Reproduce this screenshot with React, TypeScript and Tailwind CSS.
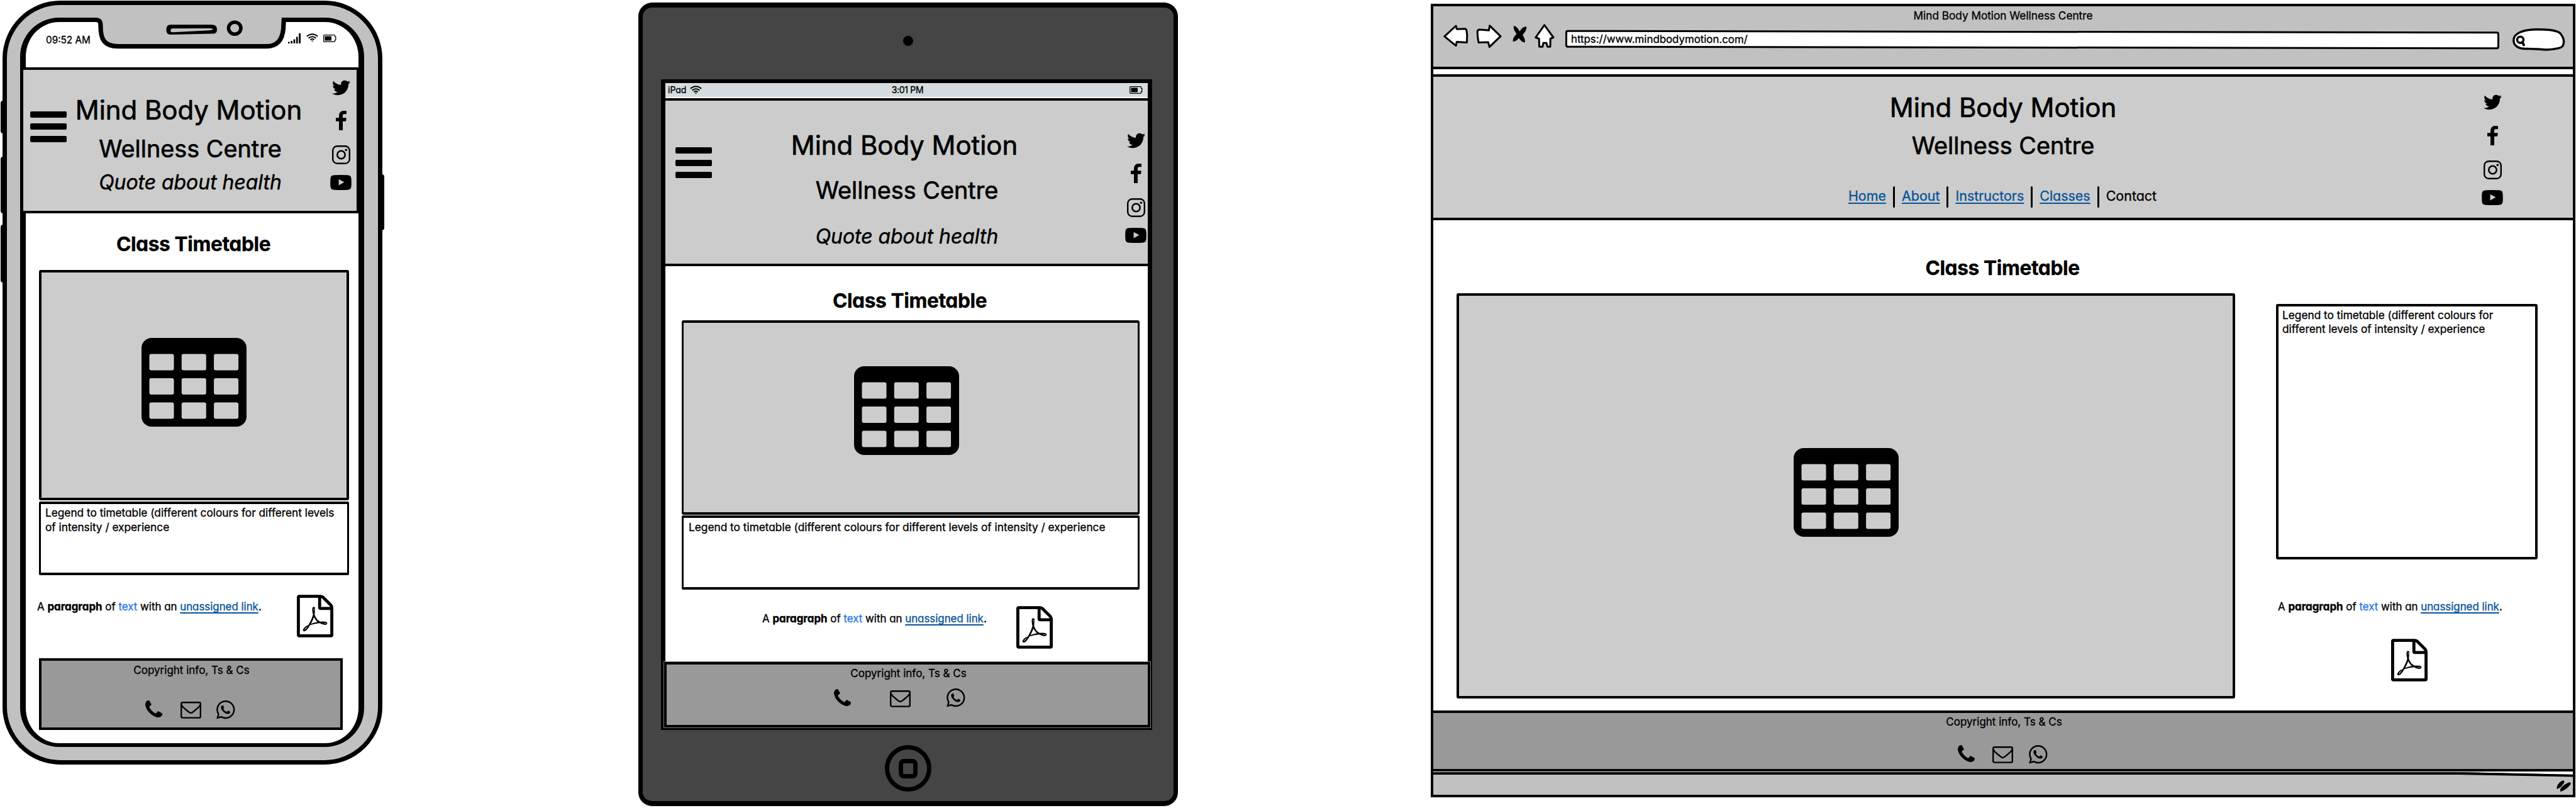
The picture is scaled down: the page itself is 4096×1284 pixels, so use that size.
import type { ReactNode } from "react";
import { FaTwitter, FaWhatsapp } from "react-icons/fa";

function FacebookIcon() {
  return (
    <svg viewBox="95 0 864 1664" preserveAspectRatio="none" className="mt-[25px] h-[31px] w-[17px]">
      <path d="M959 12v264h-157q-86 0-116 36t-30 108v189h293l-39 296h-254v759h-306v-759h-255v-296h255v-218q0-186 104-288.5t277-102.5q147 0 228 12z" />
    </svg>
  );
}

function InstagramIcon() {
  return (
    <svg viewBox="0 0 29 30" className="mt-[24px] h-[30px] w-[29px]">
      <rect x="1.2" y="1.2" width="26.6" height="27.6" rx="7" fill="none" stroke="#000" strokeWidth="2.4" />
      <circle cx="14.5" cy="15" r="6.2" fill="none" stroke="#000" strokeWidth="2.6" />
      <circle cx="22.3" cy="7.2" r="1.8" />
    </svg>
  );
}

function YoutubeIcon() {
  return (
    <svg viewBox="0 0 34 24" className="mt-[17px] h-[24px] w-[34px]">
      <path
        fillRule="evenodd"
        d="M7 .3Q17-.3 27 .3C32 .6 33.2 2 33.6 6.500Q34 12 33.600 17.500C33.200 22 32 23.400 27 23.700Q17 24.300 7 23.700C2 23.400.8 22 .4 17.500Q0 12 .4 6.500C.8 2 2 .6 7 .3ZM13.600 6.800V16.400L22.400 11.600Z"
      />
    </svg>
  );
}

function Socials() {
  return (
    <div className="flex w-[34px] flex-col items-center">
      <div className="flex h-[24px] items-center">
        <FaTwitter className="h-[29px] w-[29px] shrink-0" />
      </div>
      <FacebookIcon />
      <InstagramIcon />
      <YoutubeIcon />
    </div>
  );
}

function PhoneIcon() {
  return (
    <svg viewBox="0 0 1408 1408" className="h-[27px] w-[27px]">
      <path d="M1408 1112q0 27-10 70.5t-21 68.5q-21 50-122 106-94 51-186 51-27 0-53-3.500t-57.500-12.500-47-14.500-55.500-20.500-49-18q-98-35-175-83-127-79-264-216t-216-264q-48-77-83-175-3-9-18-49t-20.500-55.500-14.500-47-12.500-57.500-3.500-53q0-92 51-186 56-101 106-122 25-11 68.500-21t70.500-10q14 0 21 3 18 6 53 76 11 19 30 54t35 63.500 31 53.500q3 4 17.500 25t21.500 35.500 7 28.500q0 20-28.500 50t-62 55-62 53-28.500 46q0 9 5 22.500t8.500 20.500 14 24 11.500 19q76 137 174 235t235 174q2 1 19 11.500t24 14 20.500 8.500 22.500 5q18 0 46-28.500t53-62 55-62 50-28.500q14 0 28.500 7t35.500 21.500 25 17.500q25 15 53.500 31t63.500 35 54 30q70 35 76 53 3 7 3 21z" />
    </svg>
  );
}

function MailIcon() {
  return (
    <svg viewBox="0 0 33 27" className="mt-[2px] h-[27px] w-[33px]">
      <rect x="1.200" y="1.200" width="30.600" height="24.400" rx="2" fill="none" stroke="#000" strokeWidth="2.400" />
      <path d="M1.500 4.500C2.500 8.500 6 10.500 9 13C12 15.500 14 18 16.500 18S21 15.500 24 13C27 10.500 30.500 8.500 31.500 4.500" fill="none" stroke="#000" strokeWidth="2.400" />
    </svg>
  );
}

function WhatsappIcon() {
  return (
    <div className="flex h-[29px] w-[29px] items-center justify-center">
      <FaWhatsapp className="h-[33.5px] w-[33.5px] shrink-0" />
    </div>
  );
}

function PdfIcon({ className }: { className: string }) {
  return (
    <svg viewBox="0 0 1536 1792" className={"h-[68px] w-[58px] shrink-0 " + className}>
      <path d="M1468 380q28 28 48 76t20 88v1152q0 40-28 68t-68 28H96q-40 0-68-28t-28-68V96q0-40 28-68t68-28h896q40 0 88 20t76 48zm-444-244v376h376q-10-29-22-41l-313-313q-12-12-41-22zm384 1528V640H992q-40 0-68-28t-28-68V128H128v1536h1280zM894 1071q33 26 84 56 59-7 117-7 147 0 177 49 16 22 2 52 0 1-1 2l-2 2v1q-6 38-71 38-48 0-115-20t-130-53q-221 24-392 83-153 262-242 262-15 0-28-7l-24-12q-1-1-6-5-10-10-6-36 9-40 56-91.500t132-96.500q14-9 23 6 2 2 2 4 52-85 107-197 68-136 104-262-24-82-30.500-159.500T657 552q11-40 42-40h22q23 0 35 15 18 21 9 68-2 6-4 8 1 3 1 8v30q-2 123-14 192 55 164 146 238zm-576 411q52-24 137-158-51 40-87.500 84t-49.500 74zm398-920q-15 42-2 132 1-7 7-44 0-3 7-43 1-4 4-8-1-1-1-2t-1-2q-1-22-13-36 0 1-1 2v2zm-124 661q135-54 284-81-2-1-13-9.500t-16-13.500q-76-67-127-176-27 86-83 197-30 56-45 83zm646-16q-24-24-140-24 76 28 124 28 14 0 18-1 0-1-2-3z" />
    </svg>
  );
}

function TableIcon({ className }: { className: string }) {
  const cells = [0, 1, 2].flatMap((r) => [0, 1, 2].map((c) => ({ r, c })));
  return (
    <svg viewBox="0 0 167 141" className={"h-[141px] w-[167px] shrink-0 " + className}>
      <rect width="167" height="141" rx="16" />
      {cells.map(({ r, c }) => (
        <rect key={`${r}-${c}`} x={12.5 + c * 51.3} y={25.6 + r * 38.5} width="39" height="25.800" rx="3" fill="#ccc" />
      ))}
    </svg>
  );
}

function WifiIcon({ className }: { className: string }) {
  return (
    <svg viewBox="0 0 19 14" className={"h-[14px] w-[19px] " + className} fill="none" stroke="#000" strokeWidth="2">
      <path d="M.8 4.800Q9.500-2.400 18.200 4.800M3.600 7.600Q9.500 2.800 15.400 7.600M6.400 10.200Q9.500 7.800 12.600 10.200" />
      <path d="M7.800 11.600h3.400L9.500 13.600z" fill="#000" stroke="none" />
    </svg>
  );
}

function BatteryIcon({ className }: { className: string }) {
  return (
    <svg viewBox="0 0 21 12" className={"h-[12px] w-[21px] " + className}>
      <path d="M1.500.7H17.500Q18.500.7 18.500 2V3.300H19.800V8.700H18.500V10Q18.500 11.300 17.500 11.300H1.500Q.7 11.300.7 10.500V1.500Q.7.700 1.500.7Z" fill="none" stroke="#000" strokeWidth="1.300" />
      <rect x="2.500" y="2.500" width="10.500" height="7" />
    </svg>
  );
}

function Hamburger({ className }: { className: string }) {
  return (
    <div className={"flex w-[58px] shrink-0 flex-col gap-[9.500px] " + className}>
      <div className="h-[10px] rounded-[2px] bg-black" />
      <div className="h-[10px] rounded-[2px] bg-black" />
      <div className="h-[10px] rounded-[2px] bg-black" />
    </div>
  );
}

function SiteTitle({ className = "" }: { className?: string }) {
  return (
    <h1 className={"text-[42px] leading-[42px] tracking-[-0.070px] [-webkit-text-stroke:0.700px] " + className}>
      Mind Body Motion
    </h1>
  );
}

function SiteSubtitle({ className }: { className: string }) {
  return <h2 className={"text-[37.800px] leading-[38px] [-webkit-text-stroke:0.700px] " + className}>Wellness Centre</h2>;
}

function Quote({ className }: { className: string }) {
  return (
    <div className={"text-[31.900px] leading-[32px] italic [-webkit-text-stroke:0.500px] " + className}>Quote about health</div>
  );
}

function Heading({ className }: { className: string }) {
  return (
    <h3 className={"text-center text-[31.700px] leading-[32px] font-bold tracking-[-0.400px] " + className}>Class Timetable</h3>
  );
}

function Paragraph({ className }: { className: string }) {
  return (
    <p className={"text-[16.880px] leading-[20px] whitespace-nowrap " + className}>
      A <b>paragraph</b> of <span className="text-[#2b78e4]">text</span> with an <Link>unassigned link</Link>.
    </p>
  );
}

function Link({ children }: { children: ReactNode }) {
  return (
    <a className="text-[#08549a] underline decoration-2 underline-offset-[3px] [text-decoration-skip-ink:none]">{children}</a>
  );
}

function Separator() {
  return <div className="mx-[11px] h-[34px] w-[3px] rounded-full bg-black" />;
}

function Phone() {
  return (
    <div className="relative w-[612px] shrink-0">
      <div className="absolute top-[160px] left-[1px] h-[52px] w-[10px] rounded-l-[4px] bg-black" />
      <div className="absolute top-[249px] left-[1px] h-[90px] w-[10px] rounded-l-[4px] bg-black" />
      <div className="absolute top-[357px] left-[1px] h-[92px] w-[10px] rounded-l-[4px] bg-black" />
      <div className="absolute top-[277px] left-[601px] h-[89px] w-[10px] rounded-r-[4px] bg-black" />
      <div className="relative mt-[1px] ml-[4px] h-[1214px] w-[604px] rounded-[92px] border-[7px] border-black bg-[#c1c1c1] pt-[20px] pl-[21px]">
        <div className="flex h-[1159px] w-[547px] flex-col rounded-[62px] border-x-[9px] border-t-[7px] border-b-[6px] border-black bg-white">
          <div className="flex h-[72px] shrink-0 items-start">
            <span className="mt-[19px] ml-[32px] text-[15.300px] leading-[20px]">09:52 AM</span>
            <svg viewBox="0 0 20 16" className="mt-[18px] ml-auto h-[16px] w-[20px]">
              <path d="M0 13.500h2.600V16H0zM4.400 12h2.600v4H4.400zM8.600 9.500h2.800V16H8.600zM13 5.500h2.600V16H13zM17.200 0H20v16h-2.800z" />
            </svg>
            <WifiIcon className="mt-[18px] ml-[9px]" />
            <BatteryIcon className="mt-[20px] mr-[35px] ml-[8px]" />
          </div>
          <div className="-mr-[1px] -ml-[8px] flex h-[232px] shrink-0 items-start border-[4px] border-black bg-[#ccc]">
            <Hamburger className="mt-[65.500px] ml-[10.500px]" />
            <div className="flex w-[394px] flex-col items-center pt-[43px]">
              <SiteTitle className="mr-[5px]" />
              <SiteSubtitle className="mt-[20.500px]" />
              <Quote className="mt-[19px]" />
            </div>
            <div className="mt-[16px] mr-[8px] ml-auto">
              <Socials />
            </div>
          </div>
          <div className="ml-[21px] w-[493px]">
            <Heading className="mt-[32.500px] mr-[2px]" />
            <div className="mt-[25.500px] flex h-[366px] justify-center rounded-[3px] border-[4px] border-black bg-[#ccc]">
              <TableIcon className="mt-[104px]" />
            </div>
            <div className="mt-[2px] h-[117px] rounded-[2px] border-x-[3px] border-y-[4px] border-black pt-[2px] pl-[7px] text-[17.240px] leading-[23px] whitespace-nowrap">
              Legend to timetable (different colours for different levels
              <br />
              of intensity / experience
            </div>
            <div className="mt-[31px] flex h-[68px] items-start justify-between">
              <Paragraph className="mt-[9px] -ml-[3px]" />
              <PdfIcon className="mr-[25px]" />
            </div>
            <div className="mt-[33px] flex h-[114px] w-[483px] flex-col items-center border-[4px] border-black bg-[#999] pt-[5px]">
              <span className="ml-[2px] text-[17px] leading-[20px]">Copyright info, Ts &amp; Cs</span>
              <div className="mt-[38px] mr-[3px] flex items-start">
                <PhoneIcon />
                <div className="ml-[29px]">
                  <MailIcon />
                </div>
                <div className="ml-[24.500px]">
                  <WhatsappIcon />
                </div>
              </div>
            </div>
          </div>
        </div>
      </div>
      <svg viewBox="0 0 310 60" className="absolute top-[20px] left-[148px] h-[60px] w-[310px]">
        <path d="M1 8V7.500H302.500V8Z" fill="#c1c1c1" />
        <path d="M4 11.500C10 11.500 12 14 12 22C12 42 17 53.500 40 53.700H276C294 53.500 301 42 302.500 26L303.300 11.500L303 4H4Z" fill="#c1c1c1" />
        <path d="M0 11.500H4C10 11.500 12 14 12 22C12 42 17 53.500 40 53.700H276C294 53.500 301 42 302.500 26L303.300 11.500H310" fill="none" stroke="#000" strokeWidth="7.200" />
        <path fillRule="evenodd" d="M124 19.200H188C195 19.200 197 22 197 27C197 31.500 195 33.500 190 33.600L124 35C119 35 116.500 32.500 116.500 28C116.500 22 118 19.200 124 19.200ZM127 25.200Q123.300 25.500 123.300 28V29.500Q123.300 31.300 127 31.200L180 28.600Q190.500 28 190.500 26.500Q190.500 25 186 25Z" />
        <ellipse cx="225.200" cy="24.800" rx="9.800" ry="9.500" fill="#c1c1c1" stroke="#000" strokeWidth="5.500" />
      </svg>
    </div>
  );
}

function Tablet() {
  return (
    <div className="mt-[4px] ml-[403px] flex h-[1277px] w-[858px] shrink-0 flex-col items-center rounded-[22px] border-x-[7px] border-y-[8px] border-black bg-[#454545]">
      <div className="mt-[45px] h-[16px] w-[16px] shrink-0 rounded-full bg-black" />
      <div className="mt-[53px] mr-[5px] flex h-[1034px] w-[781px] shrink-0 flex-col border-x-[7px] border-t-[6px] border-b-[4px] border-black bg-white">
        <div className="grid h-[22px] shrink-0 grid-cols-[1fr_auto_1fr] items-center bg-[#d6dde0] text-[15px] leading-[20px]">
          <div className="flex items-center">
            <span className="ml-[4px] text-[14px]">iPad</span>
            <WifiIcon className="ml-[6px]" />
          </div>
          <span className="mr-[-3px] text-[14px] tracking-[-0.300px]">3:01 PM</span>
          <BatteryIcon className="mr-[8px] justify-self-end" />
        </div>
        <div className="mt-[2px] flex h-[267px] shrink-0 items-start border-y-[4px] border-black bg-[#ccc]">
          <Hamburger className="mt-[74px] ml-[16px]" />
          <div className="flex w-[620px] flex-col items-center pt-[50px]">
            <SiteTitle className="mr-[8px]" />
            <SiteSubtitle className="mt-[30.500px]" />
            <Quote className="mt-[39px]" />
          </div>
          <div className="mt-[51px] mr-[2px] ml-auto">
            <Socials />
          </div>
        </div>
        <div className="ml-[26px] w-[728px]">
          <Heading className="mt-[38.500px] mr-[3px]" />
          <div className="mt-[15.500px] flex h-[309px] justify-center rounded-[3px] border-x-[3px] border-y-[4px] border-black bg-[#ccc]">
            <TableIcon className="mt-[69px] mr-[14px]" />
          </div>
          <div className="mt-[1px] h-[118px] rounded-[2px] border-x-[3px] border-y-[4px] border-black pt-[3px] pl-[8px] text-[17.280px] leading-[23px] whitespace-nowrap">
            Legend to timetable (different colours for different levels of intensity / experience
          </div>
          <div className="mt-[26px] flex h-[68px] items-start gap-[47px]">
            <Paragraph className="mt-[10px] ml-[128px]" />
            <PdfIcon className="" />
          </div>
        </div>
        <div className="mt-[21px] -mr-[4px] -ml-[2px] flex h-[104px] shrink-0 flex-col items-center border-[4px] border-black bg-[#999] pt-[4px] outline-1 outline-[#777]">
          <span className="ml-[4px] text-[17px] leading-[20px]">Copyright info, Ts &amp; Cs</span>
          <div className="mt-[14.500px] mr-[25px] flex items-start">
            <PhoneIcon />
            <div className="ml-[62.500px]">
              <MailIcon />
            </div>
            <div className="ml-[57px]">
              <WhatsappIcon />
            </div>
          </div>
        </div>
      </div>
      <div className="mt-[24px] flex h-[74px] w-[74px] shrink-0 items-center justify-center rounded-full border-[7px] border-black">
        <div className="h-[31px] w-[30px] rounded-[8px] border-[7px] border-black" />
      </div>
    </div>
  );
}

function BrowserToolbar() {
  return (
    <div className="flex h-[100px] shrink-0 flex-col border-b-[4px] border-black bg-[#c1c1c1]">
      <div className="mt-[4.500px] text-center text-[17.200px] leading-[20px]">Mind Body Motion Wellness Centre</div>
      <div className="mt-[2.500px] flex items-start">
        <svg viewBox="0 0 40 36" className="mt-[2px] ml-[16px] h-[36px] w-[40px]">
          <path d="M1.800 18.800L20 2L21.300 7.200L34.500 6.800Q36.500 7 37 10L37.800 17L37.400 28.600L21.300 27.400L20 33.700Z" fill="#fff" stroke="#000" strokeWidth="3" strokeLinejoin="round" />
        </svg>
        <svg viewBox="0 0 41 38" className="mt-[2px] ml-[12px] h-[38px] w-[41px]">
          <path d="M2.200 11Q2.500 8 6 7.900L20.500 9.300L21.700 1.800L39 18.600L21.300 35.600L19.300 28L4 28.600L2.600 19Z" fill="#fff" stroke="#000" strokeWidth="3" strokeLinejoin="round" />
        </svg>
        <svg viewBox="0 0 23 27" className="mt-[4px] ml-[17px] h-[27px] w-[23px]">
          <path d="M2 0Q7 .5 11.500 9Q15 1.500 22 1.200Q23.500 6 16 14.500Q20 20 20 26.500Q14 26 10 19.500Q6 25 .5 25Q0 19 6.500 13Q.5 5 2 0Z" />
        </svg>
        <svg viewBox="0 0 32 38" className="mt-[1px] ml-[12px] h-[38px] w-[32px]">
          <path d="M1.800 21.500L15.700 1.800L30 21.500L25.200 23.500L25 36.200H20.500L19 30.200H14L12.800 36.200H7.600L7.200 23.500Z" fill="#fff" stroke="#000" strokeWidth="3" strokeLinejoin="round" />
        </svg>
        <div className="mt-[12px] ml-[17px] h-[28px] w-[1485px] rotate-[0.100deg] rounded-[4px] border-[3.500px] border-black bg-white pl-[6px] text-[16.840px] leading-[22px]">
          https://www.mindbodymotion.com/
        </div>
        <svg viewBox="0 0 84 36" className="mt-[8px] ml-[21px] h-[36px] w-[84px]">
          <path d="M1.800 19C2 8 16 1.800 40 1.800C60 1.800 72 4 76 8C80 13 82 17 81.500 22Q81 29 76.500 30.500C66 34 54 34.500 44 33.300L22 32.400C10 33 1.800 28 1.800 19Z" fill="#fff" stroke="#000" strokeWidth="3.400" />
          <circle cx="12.500" cy="18.300" r="5" fill="none" stroke="#000" strokeWidth="3.400" />
          <path d="M15.500 22L18 26.500" stroke="#000" strokeWidth="3.800" strokeLinecap="round" />
        </svg>
      </div>
    </div>
  );
}

function Browser() {
  return (
    <div className="mt-[6px] ml-[402px] flex h-[1261px] w-[1820px] shrink-0 flex-col border-[4px] border-black bg-white">
      <BrowserToolbar />
      <div className="mt-[8px] -mr-[4px] -ml-[4px] grid h-[232px] shrink-0 grid-cols-[1fr_auto_1fr] items-start border-[4px] border-black bg-[#ccc]">
        <div />
        <div className="flex flex-col items-center pt-[28px]">
          <SiteTitle className="" />
          <SiteSubtitle className="mt-[19.500px]" />
          <div className="mt-[46px] mr-[2px] flex items-start text-[21.450px] leading-[30px]">
            <Link>Home</Link>
            <Separator />
            <Link>About</Link>
            <Separator />
            <Link>Instructors</Link>
            <Separator />
            <Link>Classes</Link>
            <Separator />
            <span>Contact</span>
          </div>
        </div>
        <div className="mt-[28.500px] mr-[111px] justify-self-end">
          <Socials />
        </div>
      </div>
      <div className="h-[779px] shrink-0">
        <Heading className="mr-[2px] pt-[59.500px]" />
        <div className="mt-[24px] flex items-start">
          <div className="ml-[37px] flex h-[644px] w-[1238px] shrink-0 justify-center rounded-[3px] border-[4px] border-black bg-[#ccc]">
            <TableIcon className="mt-[242.500px]" />
          </div>
          <div className="mt-[17px] ml-[65px] w-[416px]">
            <div className="h-[406px] rounded-[3px] border-[4px] border-black pt-[3px] pl-[6px] text-[17.280px] leading-[22.600px] whitespace-nowrap">
              Legend to timetable (different colours for
              <br />
              different levels of intensity / experience
            </div>
            <Paragraph className="mt-[65.500px] ml-[3px]" />
            <PdfIcon className="mt-[41px] ml-[183px]" />
          </div>
        </div>
      </div>
      <div className="-mx-[4px] flex h-[97px] shrink-0 flex-col items-center border-[4px] border-black bg-[#999] pt-[4px]">
        <span className="ml-[3px] text-[17px] leading-[20px]">Copyright info, Ts &amp; Cs</span>
        <div className="mt-[27px] mr-[2px] flex items-start">
          <PhoneIcon />
          <div className="ml-[28px]">
            <MailIcon />
          </div>
          <div className="ml-[24.500px]">
            <WhatsappIcon />
          </div>
        </div>
      </div>
      <div className="relative mt-px flex flex-1 items-center justify-end border-t-[4px] border-black bg-[#c1c1c1]">
        <svg viewBox="0 0 182 8" className="absolute -top-[4px] right-0 h-[8px] w-[182px]">
          <path d="M0 0H182V4Z" fill="#fff" />
          <path d="M0 0L182 3.800V7.500L0 4Z" />
        </svg>
        <svg viewBox="0 0 23 18" className="mt-[4px] mr-[3px] h-[18px] w-[23px]">
          <path d="M10 0Q13.500.5 12 4Q8 11 1 14Q-.5 11 2 7Q5.500 2 10 0ZM21 3Q24 4 22 7Q15 15.500 6.500 18Q4.500 15 8 11Q14 5 21 3Z" />
        </svg>
      </div>
    </div>
  );
}

export default function App() {
  return (
    <div className="flex h-[1284px] w-[4096px] items-start overflow-hidden bg-white font-['Inter','Noto_Sans',sans-serif] text-black [-webkit-text-stroke:0.350px] [font-feature-settings:'cv11']">
      <Phone />
      <Tablet />
      <Browser />
    </div>
  );
}
